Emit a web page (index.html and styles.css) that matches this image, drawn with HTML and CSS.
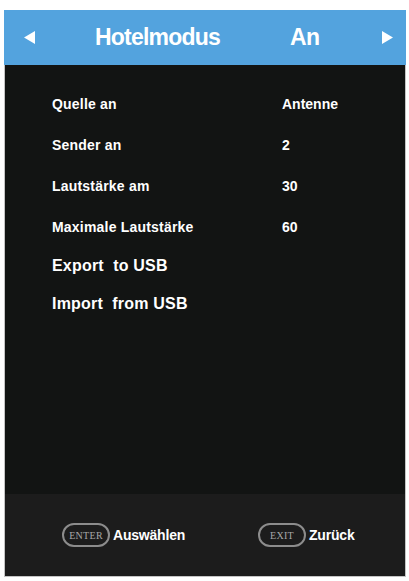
FILE: index.html
```html
<!DOCTYPE html>
<html lang="de">
<head>
<meta charset="utf-8">
<title>Hotelmodus</title>
<link rel="stylesheet" href="styles.css">
</head>
<body>
<div class="screen">
  <div class="header">
    <svg class="arrow" width="11" height="13" viewBox="0 0 11 13"><polygon points="11,0 11,13 0,6.5" fill="#fff"/></svg>
    <div class="title">Hotelmodus</div>
    <div class="hval">An</div>
    <svg class="arrow arrow-r" width="11" height="13" viewBox="0 0 11 13"><polygon points="0,0 0,13 11,6.5" fill="#fff"/></svg>
  </div>
  <div class="panel">
    <div class="list">
      <div class="row"><span class="label">Quelle an</span><span class="value">Antenne</span></div>
      <div class="row"><span class="label">Sender an</span><span class="value">2</span></div>
      <div class="row"><span class="label">Lautstärke am</span><span class="value">30</span></div>
      <div class="row"><span class="label">Maximale Lautstärke</span><span class="value">60</span></div>
      <div class="row big"><span class="label">Export&nbsp; to USB</span></div>
      <div class="row big"><span class="label">Import&nbsp; from USB</span></div>
    </div>
    <div class="footer">
      <div class="hint hint-first"><span class="pill">ENTER</span><span class="htext">Auswählen</span></div>
      <div class="hint"><span class="pill">EXIT</span><span class="htext">Zurück</span></div>
    </div>
  </div>
</div>
</body>
</html>
```

FILE: styles.css
```css
html, body {
  margin: 0;
  padding: 0;
  background: #ffffff;
}
body {
  font-family: "Liberation Sans", Arial, sans-serif;
  color: #ffffff;
}
.screen {
  margin: 10px 0 0 4px;
  width: 402px;
}
.header {
  height: 55px;
  background: #53a3de;
  display: flex;
  align-items: center;
  padding: 0 13px 0 20px;
  box-sizing: border-box;
}
.arrow {
  display: block;
  flex: none;
}
.arrow-r {
  margin-left: auto;
}
.title {
  margin-left: 60px;
  width: 195px;
  font-size: 23px;
  font-weight: bold;
  letter-spacing: -0.8px;
}
.hval {
  font-size: 23px;
  font-weight: bold;
  letter-spacing: -0.5px;
}
.panel {
  border: 1px solid #c4c4c4;
  border-top: none;
  background: #121413;
  height: 512px;
  box-sizing: border-box;
  display: flex;
  flex-direction: column;
}
.list {
  flex: 1;
  padding: 18px 0 0 47px;
}
.row {
  height: 41px;
  display: flex;
  align-items: center;
  font-size: 14px;
  font-weight: bold;
}
.row.big {
  height: 38px;
  font-size: 16px;
}
.label {
  width: 230px;
  letter-spacing: 0.2px;
}
.footer {
  height: 82px;
  background: #1c1c1c;
  display: flex;
  align-items: center;
  padding-left: 57px;
}
.hint {
  display: flex;
  align-items: center;
}
.hint-first {
  width: 196px;
}
.pill {
  box-sizing: border-box;
  height: 24px;
  width: 48px;
  border: 2px solid #8c8c8c;
  border-radius: 12px;
  color: #a8a8a8;
  font-family: "Liberation Serif", serif;
  font-size: 10px;
  letter-spacing: 0.3px;
  display: flex;
  align-items: center;
  justify-content: center;
}
.htext {
  margin-left: 3px;
  font-size: 14px;
  font-weight: bold;
  letter-spacing: -0.2px;
}
```
